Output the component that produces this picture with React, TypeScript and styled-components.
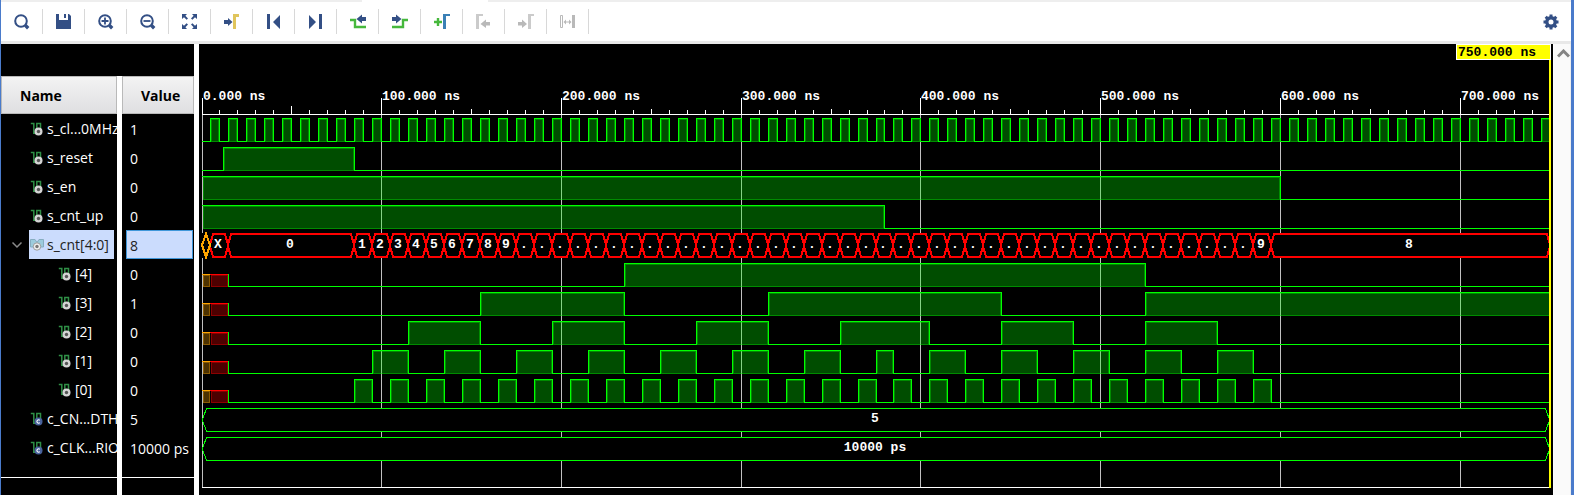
import React, { useLayoutEffect, useRef, useState } from "react";
import styled, { createGlobalStyle } from "styled-components";

const NAVY = "#334f85";
const GREEN = "#46b83c";
const GRAY = "#b9b9b9";
const UI_FONT = '"Open Sans", "Noto Sans", sans-serif';
const MONO_FONT = '"Liberation Mono", monospace';

const GlobalStyle = createGlobalStyle`
  * { box-sizing: border-box; }
  body { margin: 0; background: #fff; }
`;

const Window = styled.div`
  display: flex;
  flex-direction: column;
  min-height: 100vh;
  border-left: 1px solid #4a7bcb;
  border-right: 3px solid #4a7bcb;
  background: #fff;
  font-family: ${UI_FONT};
`;

const TabStrip = styled.div`
  display: flex;
  height: 2px;
  background: #eee;
`;

const ActiveTab = styled.div`
  width: 126px;
  margin-left: 361px;
  background: #fff;
`;

const Toolbar = styled.div`
  display: flex;
  align-items: center;
  height: 42px;
  border-bottom: 3px solid #e8e8e8;
  background: #fff;
`;

const ToolButton = styled.button<{ $last?: boolean }>`
  display: flex;
  align-items: center;
  justify-content: center;
  width: ${(p) => (p.$last ? "40px" : "42px")};
  height: 25px;
  padding: 0;
  border: 0;
  border-right: ${(p) => (p.$last ? "0" : "1px solid #d8d8d8")};
  margin-left: ${(p) => (p.$last ? "auto" : "0")};
  background: none;
`;

const Main = styled.div`
  display: flex;
  flex: 1;
`;

const SignalPanel = styled.section`
  display: flex;
  flex-direction: column;
  width: 193px;
  flex: none;
  padding-top: 32px;
  background: #000;
`;

const SignalTable = styled.table`
  width: 193px;
  table-layout: fixed;
  border-spacing: 0;
  color: #fff;
  font-size: 14px;
  line-height: 20px;
`;

const HeadCell = styled.th<{ $value?: boolean }>`
  width: ${(p) => (p.$value ? "77px" : "116px")};
  height: 38px;
  padding: 0;
  border-left: ${(p) => (p.$value ? "5px solid #fff" : "0")};
`;

const HeadLabel = styled.div`
  height: 38px;
  padding-left: 18px;
  border: 1px solid #b9b9b9;
  background: linear-gradient(#f3f3f3, #dfdfe1);
  color: #000;
  font-size: 14px;
  font-weight: 700;
  line-height: 38px;
  text-align: left;
`;

const NameCell = styled.td`
  height: 29px;
  padding: 0;
  overflow: hidden;
`;

const NameLine = styled.div<{ $indent: boolean }>`
  display: flex;
  align-items: center;
  height: 29px;
  padding-left: ${(p) => (p.$indent ? "56px" : "28px")};
  white-space: nowrap;
`;

const ExpandButton = styled.button`
  display: flex;
  width: 18px;
  height: 16px;
  flex: none;
  margin-left: -18px;
  padding: 4px 0 0;
  border: 0;
  background: none;
`;

const NameTag = styled.span<{ $selected: boolean }>`
  display: flex;
  align-items: center;
  gap: 3px;
  flex: none;
  height: 29px;
  padding: 1px 5px 0 1px;
  background: ${(p) => (p.$selected ? "#cbdcfd" : "transparent")};
  color: ${(p) => (p.$selected ? "#222" : "#fff")};
`;

const ValueCell = styled.td`
  height: 29px;
  padding: 0 1px 0 4px;
  border-left: 5px solid #fff;
  overflow: hidden;
`;

const ValueBox = styled.div<{ $selected: boolean }>`
  height: 29px;
  padding-left: 3px;
  border: 1px solid ${(p) => (p.$selected ? "#3f97da" : "transparent")};
  background: ${(p) => (p.$selected ? "#cbdcfd" : "transparent")};
  color: ${(p) => (p.$selected ? "#222" : "#fff")};
  line-height: 29px;
  white-space: nowrap;
`;

const PanelFoot = styled.div`
  display: flex;
  flex: 1;
  min-height: 33px;
  padding-left: 116px;
`;

const FootDivider = styled.div`
  width: 5px;
  background: #fff;
`;

const FootRule = styled.div`
  height: 1px;
  margin: 15px 0 -16px;
  background: #fff;
`;

const Splitter = styled.div`
  width: 5px;
  flex: none;
  background: #fff;
`;

const WavePanel = styled.section`
  position: relative;
  flex: 1;
  min-width: 0;
  min-height: 451px;
  background: #000;
  overflow: hidden;
`;

const Chart = styled.svg`
  display: block;
  font-family: ${MONO_FONT};
  font-size: 13px;
  font-weight: 700;
`;

const CursorLabel = styled.div`
  position: absolute;
  top: 0;
  right: 2px;
  width: 95px;
  height: 16px;
  padding-left: 1px;
  border: 1px solid #fff;
  background: #ff0;
  color: #000;
  font: 700 13px/16px ${MONO_FONT};
  white-space: nowrap;
`;

const ScrollTrack = styled.div`
  width: 18px;
  flex: none;
  padding: 5px 0 0 3px;
  border-left: 1px solid #fff;
  border-right: 1px solid #eee;
  background: #fafafa;
`;

const ScrollButton = styled.button`
  display: flex;
  width: 13px;
  height: 10px;
  padding: 0;
  border: 0;
  background: none;
`;

const Icon = ({ children }: { children: React.ReactNode }) => (
  <svg width="16" height="16" viewBox="0 0 16 16" aria-hidden="true">
    {children}
  </svg>
);

const Lens = ({ children }: { children?: React.ReactNode }) => (
  <Icon>
    <circle cx="7" cy="7" r="5.8" fill="none" stroke={NAVY} strokeWidth="2" />
    <path d="M11.3 11.3L14.2 14.2" stroke={NAVY} strokeWidth="3.4" />
    {children}
  </Icon>
);

const tools: { label: string; icon: React.ReactNode; disabled?: boolean }[] = [
  { label: "Search", icon: <Lens /> },
  {
    label: "Save",
    icon: (
      <Icon>
        <path fill={NAVY} d="M0 0h3v6h9V0h1l2 2v13H0z" />
        <path fill={NAVY} d="M8 0h2v4H8z" />
      </Icon>
    ),
  },
  { label: "Zoom in", icon: <Lens><path d="M3.5 7h7M7 3.5v7" stroke={NAVY} strokeWidth="1.8" /></Lens> },
  { label: "Zoom out", icon: <Lens><path d="M3.5 7h7" stroke={NAVY} strokeWidth="1.8" /></Lens> },
  {
    label: "Zoom fit",
    icon: (
      <Icon>
        <path fill={NAVY} d="M0 0h5L3.4 1.8 6 4.4 4.6 5.8 2 3.2 0 5zM15 0v5l-2-1.8-2.6 2.6L9 4.4l2.6-2.6L10 0zM0 15v-5l2 1.8 2.6-2.6L6 10.6l-2.6 2.6L5 15zM15 15h-5l1.6-1.8L9 10.6l1.4-1.4 2.6 2.6 2-1.8z" />
      </Icon>
    ),
  },
  {
    label: "Go to cursor",
    icon: (
      <Icon>
        <path fill={NAVY} d="M0 6h4V4l4.500 4L4 12v-2H0z" />
        <path fill="#e0c55c" d="M9 0h6v3h-3v12H9z" />
      </Icon>
    ),
  },
  { label: "Go to start", icon: <Icon><path fill={NAVY} d="M1 0h3v15H1zM14 1v14L7 8z" /></Icon> },
  { label: "Go to end", icon: <Icon><path fill={NAVY} d="M11 0h3v15h-3zM1 1v14l7-7z" /></Icon> },
  {
    label: "Previous transition",
    icon: (
      <Icon>
        <path fill="none" stroke={GREEN} strokeWidth="2.4" d="M0 6h5v7h11" />
        <path fill={NAVY} d="M16 3h-4V.5L6.500 5l5.500 4.500V7h4z" />
      </Icon>
    ),
  },
  {
    label: "Next transition",
    icon: (
      <Icon>
        <path fill="none" stroke={GREEN} strokeWidth="2.4" d="M0 13h11V6h5" />
        <path fill={NAVY} d="M0 3h4V.5L9.500 5 4 9.500V7H0z" />
      </Icon>
    ),
  },
  {
    label: "Add marker",
    icon: (
      <Icon>
        <path stroke={GREEN} strokeWidth="2.4" d="M0 8h8M4 4v8" />
        <path fill="#3a80b6" d="M9 0h7v2h-4v13H9z" />
      </Icon>
    ),
  },
  {
    label: "Previous marker",
    disabled: true,
    icon: (
      <Icon>
        <path fill={GRAY} d="M0 0h7v2H3v13H0z" opacity=".75" />
        <path fill={GRAY} d="M14 8h-4V5.500L4.500 10l5.500 4v-2.500h4z" />
      </Icon>
    ),
  },
  {
    label: "Next marker",
    disabled: true,
    icon: (
      <Icon>
        <path fill={GRAY} d="M0 8h4V5.500L9 10l-5 4v-2.500H0z" />
        <path fill={GRAY} d="M10 0h6v2h-3v13h-3z" opacity=".75" />
      </Icon>
    ),
  },
  {
    label: "Swap cursors",
    disabled: true,
    icon: (
      <Icon>
        <path fill="none" stroke={GRAY} d="M.5 1.500h2v12h-2z" />
        <path fill={GRAY} d="M12 1h3v13h-3zM3.500 8L6 5.500v2h3v-2L11.500 8 9 10.500v-2H6v2z" />
      </Icon>
    ),
  },
];

const Gear = () => (
  <Icon>
    <circle cx="8" cy="8" r="4.2" fill="none" stroke={NAVY} strokeWidth="3.4" />
    {[0, 45, 90, 135].map((a) => (
      <path key={a} d="M8 .5v3M8 12.500v3" stroke={NAVY} strokeWidth="3" transform={`rotate(${a} 8 8)`} />
    ))}
  </Icon>
);

type Kind = "wire" | "const" | "bus";

const SignalIcon = ({ kind }: { kind: Kind }) =>
  kind === "bus" ? (
    <svg width="14" height="14" viewBox="0 0 14 14" aria-hidden="true">
      <path fill="#9ccbdc" stroke="#86adc0" d="M.5 1.500h4.500l2 3 2-3h4.500v7.500H.5z" />
      <circle cx="7" cy="8.500" r="3.700" fill="#f2f2f2" stroke="#9a9a9a" />
      <circle cx="7" cy="8.500" r="1.700" fill="#777" />
    </svg>
  ) : (
    <svg width="14" height="14" viewBox="0 0 14 14" aria-hidden="true">
      <path fill="none" stroke="#2f8f46" strokeWidth="1.500" d="M.8 1.500h3v9.700h3V1.500h3.700v6" />
      <circle cx="8.500" cy="9.500" r="4" fill={kind === "wire" ? "#d4d4d4" : "#48629c"} />
      {kind === "wire" ? (
        <circle cx="8.500" cy="9.500" r="1.700" fill="#555" />
      ) : (
        <path d="M9.800 8.300a1.700 1.700 0 1 0 0 2.400" fill="none" stroke="#fff" strokeWidth="1.100" />
      )}
    </svg>
  );

const signals: { name: string; value: string; kind: Kind; indent?: boolean; selected?: boolean }[] = [
  { name: "s_cl...0MHz", value: "1", kind: "wire" },
  { name: "s_reset", value: "0", kind: "wire" },
  { name: "s_en", value: "0", kind: "wire" },
  { name: "s_cnt_up", value: "0", kind: "wire" },
  { name: "s_cnt[4:0]", value: "8", kind: "bus", selected: true },
  { name: "[4]", value: "0", kind: "wire", indent: true },
  { name: "[3]", value: "1", kind: "wire", indent: true },
  { name: "[2]", value: "0", kind: "wire", indent: true },
  { name: "[1]", value: "0", kind: "wire", indent: true },
  { name: "[0]", value: "0", kind: "wire", indent: true },
  { name: "c_CN...DTH", value: "5", kind: "const" },
  { name: "c_CLK...RIO", value: "10000 ps", kind: "const" },
];

/* Simulation data, times in ns */
const END = 750;
type Span = [number, number];

const clock: Span[] = Array.from({ length: 75 }, (_, i) => [i * 10 + 5, i * 10 + 10]);

const counts: { from: number; to: number; value: number }[] = [{ from: 15, to: 85, value: 0 }];
for (let t = 85, v = 1; t <= 595; t += 10) {
  counts.push({ from: t, to: t === 595 ? END : t + 10, value: v });
  v += t < 375 ? 1 : -1;
}

const bitSpans = (bit: number): Span[] => {
  const spans: Span[] = [];
  counts.forEach(({ from, to, value }) => {
    if (!((value >> bit) & 1)) return;
    const last = spans[spans.length - 1];
    if (last && last[1] === from) last[1] = to;
    else spans.push([from, to]);
  });
  return spans;
};

const ROW = 29;
const FIRST_ROW = 70;
const rowTop = (i: number) => FIRST_ROW + i * ROW;

/* The half-way tick of the first division is the tallest one */
const tickHeight = (t: number) => (t === 50 ? 8 : t % 50 === 0 ? 5 : 4);

type Scale = (t: number) => number;

const Digital = ({ x, row, spans, from = 0 }: { x: Scale; row: number; spans: Span[]; from?: number }) => {
  const top = rowTop(row) + 4;
  const low = rowTop(row) + 27;
  let line = from > 0 ? `M${x(from)} ${top + 11}V${low}` : "";
  let at = from;
  spans.forEach(([a, b]) => {
    if (a > at) line += `M${x(at)} ${low}H${x(a)}`;
    line += a > 0 ? `M${x(a)} ${low}V${top}` : `M${x(0)} ${top}`;
    line += `H${x(b)}`;
    if (b < END) line += `V${low}`;
    at = b;
  });
  if (at < END) line += `M${x(at)} ${low}H${x(END)}`;
  return (
    <>
      {spans.map(([a, b]) => (
        <React.Fragment key={a}>
          <rect x={x(a) + 1} y={top + 1} width={x(b) - x(a) - 1} height={23} fill="#0f0" fillOpacity=".3" />
          <path
            d={`M${x(a) + 1} ${low}V${top + 1}H${x(b) - 1}V${low}Z`}
            transform="translate(.5 .5)"
            fill="none"
            stroke="#0f0"
            strokeOpacity=".35"
          />
        </React.Fragment>
      ))}
      <path d={line} transform="translate(.5 .5)" fill="none" stroke="#0f0" strokeLinecap="square" />
    </>
  );
};

const Unknown = ({ x, row }: { x: Scale; row: number }) => {
  const y = rowTop(row) + 15;
  const block = (a: number, b: number, color: string) => (
    <>
      <rect x={a + 1} y={y + 1} width={b - a - 1} height={12} fill={color} fillOpacity=".3" />
      <rect x={a + 1.5} y={y + 1.5} width={b - a - 2} height={11} fill="none" stroke={color} strokeOpacity=".35" />
      <rect x={a} y={y} width={b - a} height={1} fill={color} />
    </>
  );
  return (
    <>
      {block(x(0), x(5), "#ffa500")}
      {block(x(5), x(15), "#f00")}
    </>
  );
};

const hexagon = (a: number, b: number, y: number, slope: number) =>
  `M${a} ${y + 15}L${a + slope} ${y + 4}H${b - slope}L${b} ${y + 15}V${y + 16}L${b - slope} ${y + 27}H${a + slope}L${a} ${y + 16}Z`;

const BusLabel = ({ a, b, row, children }: { a: number; b: number; row: number; children: string }) => (
  <text x={Math.floor((a + b) / 2) - 1} y={rowTop(row) + 18} textAnchor="middle" fill="#fff">
    {children}
  </text>
);

const Waveform = () => {
  const ref = useRef<HTMLElement>(null);
  const [width, setWidth] = useState(1354);
  useLayoutEffect(() => {
    const el = ref.current;
    if (!el) return;
    const measure = () => setWidth(el.clientWidth);
    measure();
    const observer = new ResizeObserver(measure);
    observer.observe(el);
    return () => observer.disconnect();
  }, []);

  const x: Scale = (t) => Math.floor(3 + (t * (width - 6)) / END);
  const right = x(END);
  const bus = rowTop(4);
  const majors = Array.from({ length: 8 }, (_, i) => i * 100);
  const minors = Array.from({ length: 75 }, (_, i) => i * 10).filter((t) => t % 100 !== 0);

  return (
    <WavePanel ref={ref} aria-label="Waveform">
      <Chart width={width} height={451} shapeRendering="crispEdges">
        {majors.map((t) => (
          <g key={t}>
            <rect x={x(t)} y={71} width={1} height={372} fill="#c0c0c0" />
            <rect x={x(t)} y={54} width={1} height={17} fill="#fff" />
            <text x={x(t) + 1} y={56} fill="#fff">
              {`${t}.000 ns`}
            </text>
          </g>
        ))}
        {minors.map((t) => (
          <rect key={t} x={x(t)} y={70 - tickHeight(t)} width={1} height={tickHeight(t)} fill="#fff" />
        ))}
        <rect x={3} y={70} width={right - 3} height={1} fill="#fff" />
        <rect x={3} y={443} width={right - 3} height={1} fill="#fff" />

        <Digital x={x} row={0} spans={clock} />
        <Digital x={x} row={1} spans={[[12, 85]]} />
        <Digital x={x} row={2} spans={[[0, 600]]} />
        <Digital x={x} row={3} spans={[[0, 380]]} />

        <rect x={3} y={bus + 3} width={right - 3} height={25} fill="#000" />
        {counts.map(({ from, to }) => (
          <path key={from} d={hexagon(x(from), x(to), bus, 3)} fill="none" stroke="#f00" strokeWidth="2" />
        ))}
        <path d={hexagon(x(5), x(15), bus, 3)} fill="none" stroke="#f00" strokeWidth="2" />
        <path d={`M${x(0)} ${bus + 15}L${x(0) + 4} ${bus + 4}L${x(5)} ${bus + 15}L${x(0) + 4} ${bus + 27}Z`} fill="none" stroke="#ffa500" strokeWidth="2" />
        <BusLabel a={x(5)} b={x(15)} row={4}>X</BusLabel>
        {counts.map(({ from, to, value }) => (
          <BusLabel key={from} a={x(from)} b={x(to)} row={4}>
            {value > 9 ? "." : String(value)}
          </BusLabel>
        ))}

        {[4, 3, 2, 1, 0].map((bit) => (
          <g key={bit}>
            <Unknown x={x} row={9 - bit} />
            <Digital x={x} row={9 - bit} spans={bitSpans(bit)} from={15} />
          </g>
        ))}

        {["5", "10000 ps"].map((label, i) => (
          <g key={label}>
            <path
              d={hexagon(3, right - 1, rowTop(10 + i), 4)}
              transform="translate(.5 .5)"
              fill="#000"
              stroke="#0f0"
            />
            <BusLabel a={3} b={right} row={10 + i}>{label}</BusLabel>
          </g>
        ))}
        <rect x={right - 1} y={16} width={2} height={428} fill="#ff0" />
      </Chart>
      <CursorLabel>750.000 ns</CursorLabel>
    </WavePanel>
  );
};

export default function App() {
  return (
    <Window>
      <GlobalStyle />
      <TabStrip>
        <ActiveTab />
      </TabStrip>
      <Toolbar role="toolbar" aria-label="Waveform tools">
        {tools.map((tool) => (
          <ToolButton key={tool.label} aria-label={tool.label} disabled={tool.disabled}>
            {tool.icon}
          </ToolButton>
        ))}
        <ToolButton $last aria-label="Settings">
          <Gear />
        </ToolButton>
      </Toolbar>
      <Main>
        <SignalPanel>
          <SignalTable>
            <thead>
              <tr>
                <HeadCell>
                  <HeadLabel>Name</HeadLabel>
                </HeadCell>
                <HeadCell $value>
                  <HeadLabel>Value</HeadLabel>
                </HeadCell>
              </tr>
            </thead>
            <tbody>
              {signals.map((s) => (
                <tr key={s.name}>
                  <NameCell>
                    <NameLine $indent={!!s.indent}>
                      {s.kind === "bus" && (
                        <ExpandButton aria-label="Collapse s_cnt">
                          <svg width="12" height="8" viewBox="0 0 12 8" aria-hidden="true">
                            <path d="M1.500 1.500L6 6l4.500-4.500" fill="none" stroke="#8a8a8a" strokeWidth="1.500" />
                          </svg>
                        </ExpandButton>
                      )}
                      <NameTag $selected={!!s.selected}>
                        <SignalIcon kind={s.kind} />
                        {s.name}
                      </NameTag>
                    </NameLine>
                  </NameCell>
                  <ValueCell>
                    <ValueBox $selected={!!s.selected}>{s.value}</ValueBox>
                  </ValueCell>
                </tr>
              ))}
            </tbody>
          </SignalTable>
          <FootRule />
          <PanelFoot>
            <FootDivider />
          </PanelFoot>
        </SignalPanel>
        <Splitter />
        <Waveform />
        <ScrollTrack>
          <ScrollButton aria-label="Scroll up">
            <svg width="13" height="9" viewBox="0 0 13 9" aria-hidden="true">
              <path d="M1 7.500l5.500-5.500L12 7.500" fill="none" stroke="#858585" strokeWidth="3" />
            </svg>
          </ScrollButton>
        </ScrollTrack>
      </Main>
    </Window>
  );
}
